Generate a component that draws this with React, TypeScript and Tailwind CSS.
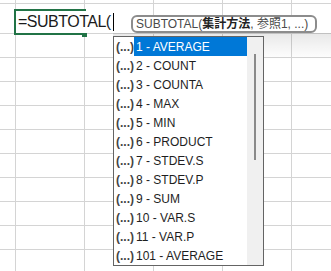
const items = [
  "1 - AVERAGE",
  "2 - COUNT",
  "3 - COUNTA",
  "4 - MAX",
  "5 - MIN",
  "6 - PRODUCT",
  "7 - STDEV.S",
  "8 - STDEV.P",
  "9 - SUM",
  "10 - VAR.S",
  "11 - VAR.P",
  "101 - AVERAGE",
];

// sheet background: 6 columns x 12 rows of empty cells
const cells = Array.from({ length: 72 }, (_, i) => i);

export default function App() {
  return (
    <div className="relative h-[271px] w-[331px] overflow-hidden bg-white font-['Liberation_Sans','Noto_Sans_CJK_JP',sans-serif]">
      <div className="grid grid-cols-[16px_69px_69px_69px_69px_1fr] grid-rows-[4px_30px_repeat(10,24px)]">
        {cells.map((i) => (
          <div
            key={i}
            className={i % 6 === 5 ? "border-b border-[#d4d4d4]" : "border-r border-b border-[#d4d4d4]"}
          />
        ))}
      </div>

      {/* active cell */}
      <div className="absolute left-[14px] top-[9px] h-[26px] w-[72px] border-2 border-[#217346]" />
      <div className="absolute left-[82px] top-[32px] h-[5px] w-[5px] bg-[#217346]" />
      <div className="absolute left-[16px] top-[11px] flex h-[22px] w-[98px] items-center bg-white pl-[2px]">
        <span className="text-[16px] leading-[22px] tracking-[-0.5px] text-[#1b1b1b]">=SUBTOTAL(</span>
        <span className="ml-auto h-[18px] w-px bg-black" />
      </div>

      {/* tooltip shadow */}
      <div className="absolute left-[113px] top-[33px] h-[27px] w-[218px] bg-linear-to-b from-[rgba(0,0,0,0.09)] to-transparent" />

      {/* argument tooltip */}
      <div className="absolute left-[131px] top-[15px] flex h-[18px] w-[186px] items-center rounded-[6px] border-2 border-[#8c8c8c] bg-white pl-[3px] text-[12px] leading-none text-[#4a4a4a]">
        <span>SUBTOTAL(</span>
        <span className="font-bold text-[#222]">集計方法</span>
        <span className="whitespace-pre">, 参照1, ...)</span>
      </div>

      {/* autocomplete list */}
      <div className="absolute left-[113px] top-[36px] flex h-[230px] w-[151px] border border-[#646464] bg-white">
        <div className="flex-1">
          {items.map((label, i) => (
            <div key={label} className="flex h-[19px] items-center">
              <span className="w-[20px] pl-[2px] text-[12px] font-bold text-[#444]">(...)</span>
              <span
                className={
                  i === 0
                    ? "flex h-full flex-1 items-center bg-[#0078d7] pl-[2px] text-[12px] text-white"
                    : "flex h-full flex-1 items-center pl-[2px] text-[12px] text-[#1e1e1e]"
                }
              >
                {label}
              </span>
            </div>
          ))}
        </div>
        <div className="relative w-[16px] bg-[#f0f0f0]">
          <div className="absolute left-[7px] top-[17px] h-[106px] w-[2px] bg-[#8a8a8a]" />
        </div>
      </div>
    </div>
  );
}
